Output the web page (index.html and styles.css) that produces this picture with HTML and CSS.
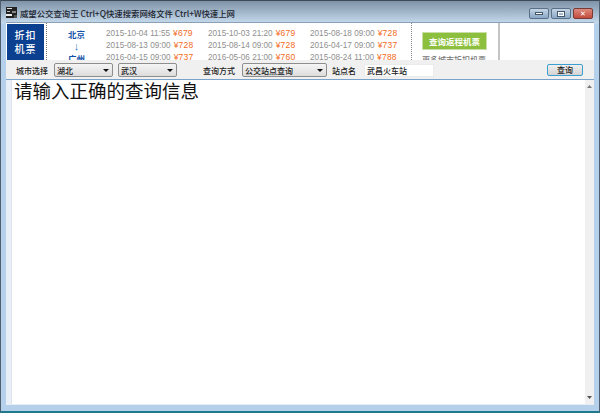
FILE: index.html
```html
<!DOCTYPE html>
<html lang="zh">
<head>
<meta charset="utf-8">
<title>威望公交查询王</title>
<link rel="stylesheet" href="styles.css">
</head>
<body>
<div class="window">
  <header class="titlebar">
    <svg class="app-icon" width="11" height="11" viewBox="0 0 11 11">
      <rect width="11" height="11" fill="#222"/>
      <rect x="1" y="1" width="5" height="1" fill="#ddd"/>
      <rect x="1" y="4" width="3" height="1" fill="#bbb"/>
      <rect x="6" y="4" width="4" height="2" fill="#888"/>
      <rect x="0" y="7" width="6" height="2" fill="#eee"/>
      <rect x="8" y="8" width="3" height="3" fill="#555"/>
    </svg>
    <span class="title-text">威望公交查询王 Ctrl+Q快速搜索网络文件 Ctrl+W快速上网</span>
    <div class="win-buttons">
      <div class="win-btn"><span class="glyph-min"></span></div>
      <div class="win-btn"><span class="glyph-max"></span></div>
      <div class="win-btn win-close"><span class="glyph-x">✕</span></div>
    </div>
  </header>
  <section class="ad">
    <div class="ad-tag"><span>折扣</span><span>机票</span></div>
    <div class="ad-route"><span>北京</span><span class="arrow">↓</span><span>广州</span></div>
    <div class="fares">
      <div class="fare-row">
        <span class="fare"><span class="when">2015-10-04 11:55</span><span class="price">¥679</span></span>
        <span class="fare"><span class="when">2015-10-03 21:20</span><span class="price">¥679</span></span>
        <span class="fare"><span class="when">2015-08-18 09:00</span><span class="price">¥728</span></span>
      </div>
      <div class="fare-row">
        <span class="fare"><span class="when">2015-08-13 09:00</span><span class="price">¥728</span></span>
        <span class="fare"><span class="when">2015-08-14 09:00</span><span class="price">¥728</span></span>
        <span class="fare"><span class="when">2016-04-17 09:00</span><span class="price">¥737</span></span>
      </div>
      <div class="fare-row">
        <span class="fare"><span class="when">2016-04-15 09:00</span><span class="price">¥737</span></span>
        <span class="fare"><span class="when">2016-05-06 21:00</span><span class="price">¥760</span></span>
        <span class="fare"><span class="when">2015-08-24 11:00</span><span class="price">¥788</span></span>
      </div>
    </div>
    <div class="ad-side">
      <div class="green-btn"><span>查询返程机票</span></div>
      <div class="side-note">更多城市折扣机票</div>
    </div>
  </section>
  <section class="toolbar">
    <span class="label label-city">城市选择</span>
    <div class="select sel-prov"><span>湖北</span><i class="caret"></i></div>
    <div class="select sel-city"><span>武汉</span><i class="caret"></i></div>
    <span class="label label-mode">查询方式</span>
    <div class="select sel-mode"><span>公交站点查询</span><i class="caret"></i></div>
    <span class="label label-stop">站点名</span>
    <div class="input">武昌火车站</div>
    <div class="query-btn">查询</div>
  </section>
  <main class="output">
    <div class="output-text">请输入正确的查询信息</div>
    <div class="scrollbar">
      <svg width="5" height="3" viewBox="0 0 5 3"><path d="M0 3L2.500 0L5 3Z" fill="#777"/></svg>
      <svg width="5" height="3" viewBox="0 0 5 3"><path d="M0 0L2.500 3L5 0Z" fill="#555"/></svg>
    </div>
  </main>
</div>
</body>
</html>
```
FILE: styles.css
```css
* { box-sizing: border-box; }
html, body { margin: 0; padding: 0; }
body {
  width: 600px;
  height: 413px;
  overflow: hidden;
  font-family: "Noto Sans CJK SC", "Liberation Sans", sans-serif;
  font-size: 8px;
  font-weight: 500;
  color: #1a1a1a;
}
.window {
  width: 600px;
  height: 413px;
  display: flex;
  flex-direction: column;
  padding: 0 5px 6px 5px;
  background: linear-gradient(180deg, #7f93a8 0, #c5d9ec 22px, #b5d0ea 23px, #b5d0ea 100%);
  border: 1px solid #4f5f70;
  border-top-color: #3e4a57;
  border-bottom: 2px solid #1f7a8c;
}
.titlebar {
  height: 21px;
  flex: none;
  display: flex;
  align-items: center;
  margin-left: -1px;
  padding-top: 2px;
}
.app-icon { flex: none; margin-left: 1px; }
.title-text {
  margin-left: 3px;
  font-size: 8.400px;
  color: #1c2530;
  white-space: nowrap;
}
.win-buttons {
  margin-left: auto;
  display: flex;
  gap: 2px;
  margin-right: 1px;
  align-self: flex-start;
  margin-top: 5px;
}
.win-btn {
  width: 20px;
  height: 11px;
  border: 1px solid #5a7087;
  border-radius: 2px;
  background: linear-gradient(180deg, #c3d4e6, #8ba8c6);
  display: flex;
  align-items: center;
  justify-content: center;
}
.win-close {
  background: linear-gradient(180deg, #dc8a7e, #c24a3c);
  border-color: #7a3b36;
}
.glyph-min { width: 8px; height: 3px; background: #fff; border: 1px solid #44566a; }
.glyph-max { width: 8px; height: 6px; border: 1px solid #44566a; box-shadow: inset 0 0 0 1px #fff; }
.glyph-x { font-family: "DejaVu Sans", sans-serif; font-size: 7px; line-height: 8px; color: #fff; font-weight: 700; }
.ad {
  height: 38px;
  flex: none;
  background: #fff;
  overflow: hidden;
  display: flex;
  border-top: 1px solid #8aa0b6;
}
.ad-tag {
  width: 37px;
  height: 36px;
  margin: 1px 0 0 1px;
  flex: none;
  background: #0b3f8f;
  color: #fff;
  display: flex;
  flex-direction: column;
  align-items: center;
  justify-content: center;
  font-size: 10px;
  line-height: 14px;
  letter-spacing: 1px;
}
.ad-route {
  width: 60px;
  margin-left: 2px;
  flex: none;
  border-left: 1px dotted #777;
  display: flex;
  flex-direction: column;
  align-items: center;
  color: #0f4fa8;
  font-weight: 700;
  font-size: 8.500px;
  line-height: 12px;
  padding-top: 5px;
}
.arrow { line-height: 12px; font-size: 11px; color: #3a7bbf; font-family: "Liberation Sans", sans-serif; font-weight: 400; }
.fares {
  width: 305px;
  flex: none;
  padding-top: 4px;
  font-family: "Liberation Sans", sans-serif;
  font-weight: 400;
  font-size: 8.200px;
}
.fare-row { display: flex; height: 12px; line-height: 12px; }
.fare { width: 102px; flex: none; white-space: nowrap; }
.when { color: #8f8f8f; }
.price { color: #f26a1b; font-size: 8.500px; margin-left: 3px; letter-spacing: 0.200px; }
.ad-side {
  width: 89px;
  flex: none;
  padding: 9px 0 0 10px;
  border-left: 1px dotted #888;
  border-right: 2px solid #c4c4c4;
}
.green-btn {
  width: 65px;
  height: 18px;
  background: #8dbf3e;
  border: 1px solid #c9dfa6;
  color: #fff;
  font-weight: 700;
  font-size: 8.500px;
  line-height: 16px;
  text-align: center;
  white-space: nowrap;
}
.side-note { margin-top: 5px; color: #777; font-size: 8px; line-height: 10px; white-space: nowrap; }
.toolbar {
  height: 20px;
  flex: none;
  background: #f0f0f0;
  display: flex;
  align-items: center;
  border-bottom: 1px solid #7aa3cc;
  padding-top: 1px;
}
.label { white-space: nowrap; }
.label-city { margin-left: 10px; }
.select {
  height: 14px;
  display: flex;
  align-items: center;
  justify-content: space-between;
  border: 1px solid #8e8e8e;
  border-radius: 2px;
  background: linear-gradient(180deg, #f5f5f5, #dcdcdc);
  padding: 0 3px 0 2px;
}
.caret { width: 0; height: 0; border: 3px solid transparent; border-top: 3px solid #111; border-bottom: 0; }
.sel-prov { width: 59px; margin-left: 6px; }
.sel-city { width: 59px; margin-left: 5px; }
.label-mode { margin-left: 26px; }
.sel-mode { width: 85px; margin-left: 7px; }
.label-stop { margin-left: 5px; }
.input { width: 70px; height: 13px; background: #fff; margin-left: 8px; line-height: 11px; padding-left: 2px; border: 1px solid #ebebeb; }
.query-btn {
  width: 36px;
  height: 12px;
  margin-left: auto;
  margin-right: 11px;
  border: 1px solid #3d9fd0;
  border-radius: 2px;
  background: linear-gradient(180deg, #f0f0f0, #d3d3d3);
  text-align: center;
  line-height: 10px;
}
.output {
  flex: 1;
  background: #fff;
  display: flex;
  border-left: 5px solid #e9eff6;
  min-height: 0;
  border-bottom: 1px solid #e8edf3;
}
.output-text {
  flex: 1;
  padding-left: 2px;
  border-left: 1px solid #dbe4ee;
  font-size: 18.500px;
  font-weight: 400;
  line-height: 21px;
  color: #111;
}
.scrollbar {
  width: 9px;
  background: #f0f0f0;
  display: flex;
  flex-direction: column;
  align-items: center;
  justify-content: space-between;
  padding: 5px 0;
  flex: none;
}
```
